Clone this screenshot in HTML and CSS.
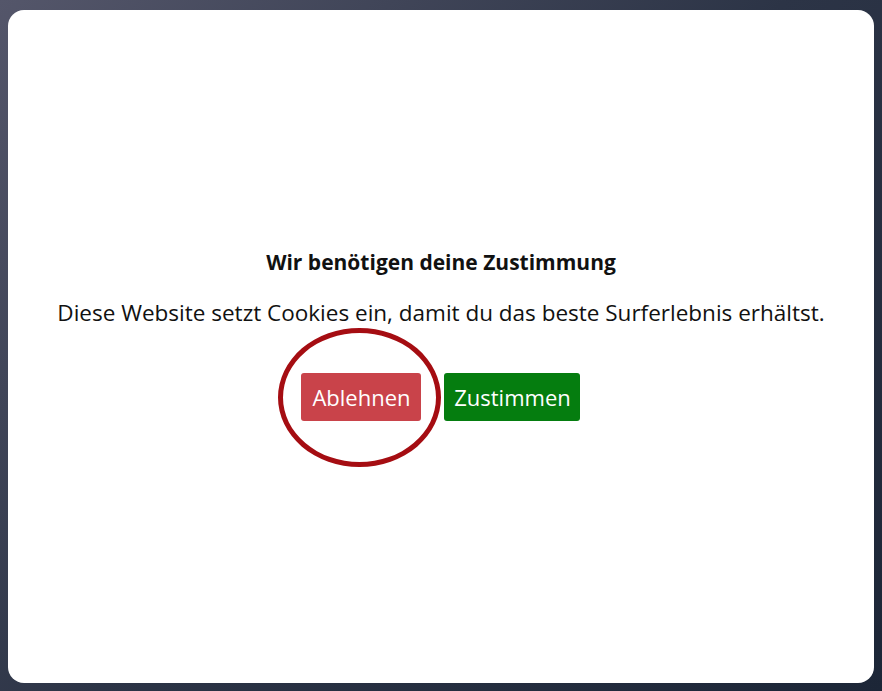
FILE: index.html
```html
<!DOCTYPE html>
<html lang="de">
<head>
  <meta charset="UTF-8">
  <meta name="viewport" content="width=device-width, initial-scale=1.0">
  <title>Cookie Zustimmung</title>
  <link rel="stylesheet" href="styles.css">
</head>
<body>
  <div class="consent-card">
    <div class="consent-content">
      <h2 class="consent-title">Wir benötigen deine Zustimmung</h2>
      <p class="consent-text">Diese Website setzt Cookies ein, damit du das beste Surferlebnis erhältst.</p>
      <div class="button-row">
        <div class="marked">
          <button class="btn btn-decline">Ablehnen</button>
          <span class="ring"></span>
        </div>
        <button class="btn btn-accept">Zustimmen</button>
      </div>
    </div>
  </div>
</body>
</html>
```

FILE: styles.css
```css
html, body {
  height: 100%;
}
body {
  margin: 0;
  padding: 10px 8px 8px 8px;
  box-sizing: border-box;
  font-family: 'Open Sans', sans-serif;
  background: linear-gradient(135deg, #54566a 0%, #2c3446 50%, #1c2637 100%);
  color: #111;
}
.consent-card {
  height: 100%;
  background: #fff;
  border-radius: 16px;
  display: flex;
  align-items: center;
  justify-content: center;
}
.consent-content {
  text-align: center;
  margin-top: -24px;
}
.consent-title {
  font-size: 21px;
  line-height: 28px;
  font-weight: 700;
  margin: 0 0 22px;
}
.consent-text {
  font-size: 22.5px;
  line-height: 30px;
  margin: 0 0 45px;
}
.button-row {
  display: flex;
  justify-content: center;
  gap: 23px;
}
.marked {
  position: relative;
}
.btn {
  font-family: inherit;
  font-size: 22px;
  color: #fff;
  border: none;
  border-radius: 3px;
  height: 48px;
  padding: 0;
  cursor: pointer;
}
.btn-decline {
  background: #c9434a;
  width: 120px;
}
.btn-accept {
  background: #057d0f;
  width: 136px;
}
/* hand-drawn marker round the decline button */
.ring {
  position: absolute;
  left: -23px;
  top: -45px;
  width: 153px;
  height: 129px;
  border: 5px solid #a50d12;
  border-radius: 50%;
  pointer-events: none;
}
```
